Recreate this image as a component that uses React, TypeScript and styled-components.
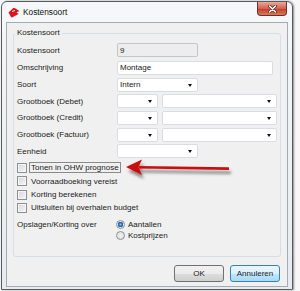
import React from 'react'
import styled, { createGlobalStyle } from 'styled-components'

//GLOBAL
const GlobalStyle = createGlobalStyle`
  body {
    margin: 0;
    background: #f7f7f7;
    font-family: "Liberation Sans", Arial, sans-serif;
    font-size: 8px;
    color: #1b1b1b;
  }
`

//STYLES
const Page = styled.div`
  position: relative;
  width: 300px;
  height: 291px;
  overflow: hidden;
`

const Window = styled.div`
  margin: 1px 0 0 1px;
  width: 292px;
  height: 289px;
  box-sizing: border-box;
  border: 1px solid #555b61;
  border-radius: 6px 6px 0 0;
  background: linear-gradient(#f5f7f9, #e7ebef);
  box-shadow: 1px 0 2px rgba(0, 0, 0, 0.45);
  display: flex;
  flex-direction: column;
`

const TitleBar = styled.div`
  height: 20px;
  display: flex;
  align-items: center;
  padding: 0 5px 0 6px;
`

const Title = styled.span`
  margin-left: 3px;
  font-size: 8.3px;
  color: #111;
`

const CloseButton = styled.div`
  margin-left: auto;
  align-self: flex-start;
  width: 30px;
  height: 14px;
  box-sizing: border-box;
  border: 1px solid #6e3027;
  border-top: none;
  border-radius: 0 0 4px 4px;
  background: linear-gradient(#e9a99c, #d3614f 50%, #c2402e 55%, #d77b5d);
  display: flex;
  align-items: center;
  justify-content: center;
`

const Client = styled.div`
  flex: 1;
  margin: 0 4px 2px 4px;
  border: 1px solid #a3acb6;
  background: #f0f0f0;
  padding: 5px 6px 0 6px;
  display: flex;
  flex-direction: column;
`

const GroupBox = styled.fieldset`
  margin: 0;
  padding: 5px 2px 15px 3px;
  border: 1px solid #d5dfe5;
  border-radius: 3px;
  display: flex;
  flex-direction: column;
`

const Legend = styled.legend`
  margin-left: -2px;
  padding: 0 2px;
  font-size: 8px;
  line-height: 10px;
`

const Rows = styled.div`
  display: flex;
  flex-direction: column;
  gap: 2.67px;
`

const Row = styled.div<{ $first?: boolean }>`
  display: grid;
  grid-template-columns: 100px 1fr;
  align-items: center;
  height: 14px;
  margin-bottom: ${p => (p.$first ? '1.3px' : '0')};
`

const Label = styled.span`
  white-space: nowrap;
`

const Controls = styled.div`
  display: flex;
  gap: 4px;
  height: 100%;
`

const Input = styled.div<{ $width: number; $readOnly?: boolean }>`
  width: ${p => p.$width}px;
  height: 100%;
  box-sizing: border-box;
  border: 1px solid ${p => (p.$readOnly ? '#c2c6cb' : '#d9dde2')};
  border-radius: 2px;
  background: ${p => (p.$readOnly ? '#ededed' : '#ffffff')};
  padding: 0 2px;
  display: flex;
  align-items: center;
`

const Select = styled(Input)`
  position: relative;
  &::after {
    content: '';
    position: absolute;
    right: 5px;
    top: 5px;
    border-left: 2.5px solid transparent;
    border-right: 2.5px solid transparent;
    border-top: 3px solid #111;
  }
`

const Checks = styled.div`
  margin-top: 3px;
  display: flex;
  flex-direction: column;
`

const CheckRow = styled.div`
  height: 13.33px;
  display: flex;
  align-items: center;
  gap: 2px;
`

const CheckBox = styled.span`
  width: 10px;
  height: 10px;
  box-sizing: border-box;
  border: 1px solid #8e9094;
  background: linear-gradient(135deg, #d4d6d8, #f7f7f7);
  box-shadow: inset 0 0 0 1px #f4f4f4;
`

const CheckText = styled.span<{ $focus?: boolean }>`
  padding: 0 1px;
  line-height: 9px;
  border: 1px ${p => (p.$focus ? 'solid #8a8a8a' : 'solid transparent')};
`

const OptionRow = styled.div`
  margin-top: 5px;
  display: grid;
  grid-template-columns: 99px 1fr;
  align-items: start;
`

const Radios = styled.div`
  display: flex;
  flex-direction: column;
`

const RadioRow = styled.div`
  height: 10.5px;
  display: flex;
  align-items: center;
  gap: 3px;
`

const Radio = styled.span<{ $checked?: boolean }>`
  width: 9px;
  height: 9px;
  box-sizing: border-box;
  border-radius: 50%;
  border: 1px solid #8e9094;
  background: ${p =>
    p.$checked
      ? 'radial-gradient(circle, #7fc3f3 0, #2a6fb3 1.8px, #1d5a9a 2.6px, #e9e9e9 3px)'
      : 'radial-gradient(circle, #f3f3f3, #d8d8d8)'};
`

const ButtonBar = styled.div`
  margin-top: 8px;
  display: flex;
  justify-content: flex-end;
  gap: 6px;
  padding-right: 1px;
`

const Button = styled.div<{ $default?: boolean }>`
  width: 50px;
  height: 17px;
  box-sizing: border-box;
  border: 1px solid ${p => (p.$default ? '#3c7fb1' : '#707070')};
  border-radius: 3px;
  background: ${p =>
    p.$default
      ? 'linear-gradient(#eaf6fd, #d9f0fc 50%, #bee6fd 51%, #a7d9f5)'
      : 'linear-gradient(#f2f2f2, #ebebeb 50%, #dddddd 51%, #cfcfcf)'};
  display: flex;
  align-items: center;
  justify-content: center;
`

const Arrow = styled.svg`
  position: absolute;
  left: 120px;
  top: 155px;
`

//DATA
const CHECKS = ['Tonen in OHW prognose', 'Voorraadboeking vereist', 'Korting berekenen', 'Uitsluiten bij overhalen budget']
const LEDGERS = ['Grootboek (Debet)', 'Grootboek (Credit)', 'Grootboek (Factuur)']

//MAIN COMPONENT
export default function App() {
  return (
    <Page>
      <GlobalStyle />
      <Window>

        {/* TITLE */}
        <TitleBar>
          <svg width="12" height="11" viewBox="0 0 12 11">
            <path d="M0.5 5.5 L5 1.2 Q6 0.5 7 1.3 L11.5 4 L8.5 5.2 L10.5 7 L4.5 10.2 Q3.5 10.7 2.8 9.8 Z" fill="#d9161d" />
            <path d="M4 4.5 L7 3.5" stroke="#fff" strokeWidth="0.9" />
          </svg>
          <Title>Kostensoort</Title>
          <CloseButton>
            <svg width="9" height="8" viewBox="0 0 9 8">
              <path d="M1.5 1 L7.5 7 M7.5 1 L1.5 7" stroke="#5a2019" strokeWidth="3" strokeLinecap="round" />
              <path d="M1.5 1 L7.5 7 M7.5 1 L1.5 7" stroke="#fff" strokeWidth="1.6" strokeLinecap="round" />
            </svg>
          </CloseButton>
        </TitleBar>

        <Client>
          <GroupBox>
            <Legend>Kostensoort</Legend>

            {/* FIELDS */}
            <Rows>
              <Row $first>
                <Label>Kostensoort</Label>
                <Controls><Input $width={81} $readOnly>9</Input></Controls>
              </Row>
              <Row>
                <Label>Omschrijving</Label>
                <Controls><Input $width={156}>Montage</Input></Controls>
              </Row>
              <Row>
                <Label>Soort</Label>
                <Controls><Select $width={81}>Intern</Select></Controls>
              </Row>
              {LEDGERS.map(l => (
                <Row key={l}>
                  <Label>{l}</Label>
                  <Controls>
                    <Select $width={41} />
                    <Select $width={115} />
                  </Controls>
                </Row>
              ))}
              <Row>
                <Label>Eenheid</Label>
                <Controls><Select $width={81} /></Controls>
              </Row>
            </Rows>

            {/* CHECKBOXES */}
            <Checks>
              {CHECKS.map((c, i) => (
                <CheckRow key={c}>
                  <CheckBox />
                  <CheckText $focus={i === 0}>{c}</CheckText>
                </CheckRow>
              ))}
            </Checks>

            {/* OPTIONS */}
            <OptionRow>
              <Label>Opslagen/Korting over</Label>
              <Radios>
                <RadioRow><Radio $checked />Aantallen</RadioRow>
                <RadioRow><Radio />Kostprijzen</RadioRow>
              </Radios>
            </OptionRow>
          </GroupBox>

          {/* BUTTONS */}
          <ButtonBar>
            <Button>OK</Button>
            <Button $default>Annuleren</Button>
          </ButtonBar>
        </Client>
      </Window>

      {/* ANNOTATION */}
      <Arrow width="118" height="32" viewBox="0 0 118 32">
        <defs>
          <filter id="sh" x="-10%" y="-50%" width="130%" height="250%">
            <feDropShadow dx="2" dy="4" stdDeviation="1.6" floodColor="#000" floodOpacity="0.45" />
          </filter>
        </defs>
        <g filter="url(#sh)">
          <path d="M19 12.3 L109 13.6" stroke="#cc0a0a" strokeWidth="2.6" />
          <path d="M6 12 L22 4.5 L18.5 12.3 L22 20 Z" fill="#cc0a0a" />
        </g>
      </Arrow>
    </Page>
  )
}
